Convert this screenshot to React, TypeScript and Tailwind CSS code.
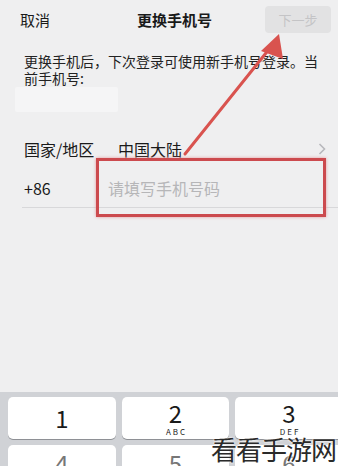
export default function App() {
  const font = { fontFamily: '"Noto Sans CJK SC", "Noto Sans", sans-serif' }
  return (
    <div className="relative w-[338px] h-[466px] overflow-hidden bg-[#efeff0] flex flex-col text-[#1a1a1a]" style={font}>
      {/* nav */}
      <div className="flex items-center h-[37px] pt-[1px]">
        <span className="ml-5 text-[15px] leading-none">取消</span>
        <span className="ml-[87px] text-[15px] font-bold leading-none">更换手机号</span>
        <div className="ml-auto mr-[7px] mt-[1px] w-[66px] h-[27px] rounded-[4px] bg-[#e2e2e3] flex items-center justify-center text-[13px] text-[#c4c4c6]">
          下一步
        </div>
      </div>

      {/* description */}
      <div className="pt-[16px] pl-6 text-[14px] leading-[17px] text-[#222]">
        更换手机后，下次登录可使用新手机号登录。当
        <br />
        前手机号:
      </div>
      <div className="ml-[15px] w-[103px] h-[25px] bg-[#f5f5f6] rounded-[2px]" />

      {/* country row */}
      <div className="mt-[18px] h-[38px] flex items-center pl-6 pr-3 text-[16px]">
        <span className="w-[94px]">国家/地区</span>
        <span>中国大陆</span>
        <svg className="ml-auto" width="8" height="12" viewBox="0 0 8 12">
          <polyline points="1.5,1 6.5,6 1.5,11" fill="none" stroke="#b8b8bc" strokeWidth="1.6" />
        </svg>
      </div>

      {/* phone row */}
      <div className="ml-[22px] h-[40px] flex items-center border-b border-[#d8d8da] text-[16px]">
        <span className="ml-[2px] w-[84px]">+86</span>
        <span className="text-[#b6b6b8]">请填写手机号码</span>
      </div>

      {/* keyboard */}
      <div className="mt-auto h-[74px] bg-[#d0d2d6] pt-[5px] pl-[8px]">
        <div className="grid grid-cols-[108px_107px_108px] gap-x-[6px] gap-y-[6px]">
          <div className="h-[42px] rounded-[5px] bg-white shadow-[0_1px_0_#8e9095] flex items-center justify-center text-[24px] leading-none">1</div>
          <div className="h-[42px] rounded-[5px] bg-white shadow-[0_1px_0_#8e9095] flex flex-col items-center justify-center">
            <span className="text-[24px] leading-none">2</span>
            <span className="text-[8px] tracking-[2px] leading-none mt-[3px] ml-[2px]">ABC</span>
          </div>
          <div className="h-[42px] rounded-[5px] bg-white shadow-[0_1px_0_#8e9095] flex flex-col items-center justify-center">
            <span className="text-[24px] leading-none">3</span>
            <span className="text-[8px] tracking-[2px] leading-none mt-[3px] ml-[2px]">DEF</span>
          </div>
          <div className="h-[42px] rounded-[5px] bg-white flex justify-center pt-[6px] text-[24px] leading-none text-[#777]">4</div>
          <div className="h-[42px] rounded-[5px] bg-white flex justify-center pt-[6px] text-[24px] leading-none text-[#777]">5</div>
          <div className="h-[42px] rounded-[5px] bg-white flex justify-center pt-[6px] text-[24px] leading-none text-[#777]">6</div>
        </div>
      </div>

      {/* red highlight box */}
      <div className="absolute left-[96px] top-[158px] w-[230px] h-[59px] border-[3px] border-[#cc4a4e] shadow-[0_0_3px_#e59a9c]" />

      {/* red arrow */}
      <svg className="absolute inset-0 pointer-events-none" width="338" height="466" viewBox="0 0 338 466">
        <line x1="185" y1="154" x2="270" y2="48" stroke="#d9534f" strokeWidth="3" strokeLinecap="round" />
        <polygon points="279,34 283,59 261,51" fill="#d9534f" />
      </svg>

      {/* watermark */}
      <div className="absolute right-[2px] bottom-[4px] text-[26px] leading-none text-[#2a2a2a] tracking-[-1px] [text-shadow:0_0_2px_#fff,0_0_2px_#fff]">
        看看手游网
      </div>
    </div>
  )
}
